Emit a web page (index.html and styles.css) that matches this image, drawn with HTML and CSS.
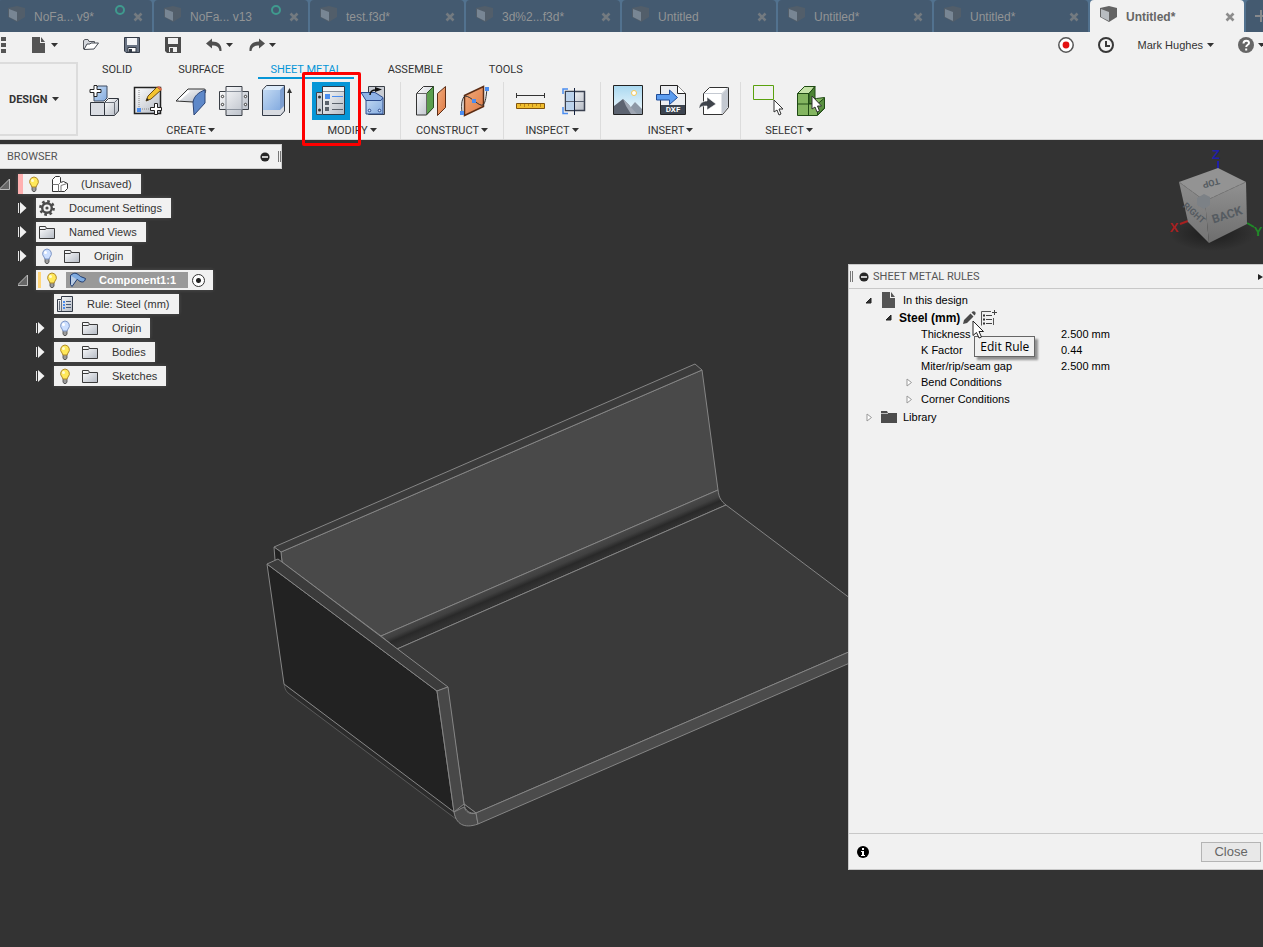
FILE: index.html
```html
<!DOCTYPE html>
<html lang="en">
<head>
    <meta charset="UTF-8">
    <meta name="viewport" content="width=device-width, initial-scale=1.0">
    <title>Untitled*</title>
    <link rel="stylesheet" href="styles.css">
</head>
<body>
    <!-- Shared icons -->
    <svg class="icon-defs" width="0" height="0" aria-hidden="true">
        <defs>
            <linearGradient id="silver" x1="0" y1="0" x2="1" y2="1">
                <stop offset="0" stop-color="#ffffff"/>
                <stop offset="1" stop-color="#b4bac4"/>
            </linearGradient>
            <linearGradient id="blue" x1="0" y1="0" x2="1" y2="1">
                <stop offset="0" stop-color="#c3daf3"/>
                <stop offset="1" stop-color="#85ace0"/>
            </linearGradient>
            <linearGradient id="orange" x1="0" y1="0" x2="1" y2="1">
                <stop offset="0" stop-color="#f2ab7c"/>
                <stop offset="1" stop-color="#dd7a45"/>
            </linearGradient>
            <linearGradient id="sky" x1="0" y1="0" x2="0" y2="1">
                <stop offset="0" stop-color="#a9d8f0"/>
                <stop offset="1" stop-color="#f4fbff"/>
            </linearGradient>
            <symbol id="cube" viewBox="0 0 17 16">
                <path d="M0 2l9-2 8 2v9l-8 5-9-5z" fill="#636363"/>
                <path d="M1 3l8 3v9l-8-4z" fill="#b8bcc0"/>
            </symbol>
            <symbol id="close" viewBox="0 0 10 10">
                <path d="M1.500 1.500l7 7M8.500 1.500l-7 7" stroke="currentColor" stroke-width="2.600" fill="none"/>
            </symbol>
            <symbol id="caret" viewBox="0 0 7 4">
                <path d="M0 0h7L3.500 4z" fill="currentColor"/>
            </symbol>
            <symbol id="file" viewBox="0 0 16 16">
                <path d="M1 0h8v6h5v10H1z" fill="#555"/>
                <path d="M10 0l4 5h-4z" fill="#555"/>
            </symbol>
            <symbol id="bulb-on" viewBox="0 0 12 16">
                <path d="M4 10h4v4l-1 1.500H5L4 14z" fill="#9a9a9a" stroke="#444" stroke-width=".8"/>
                <path d="M6 1a4.700 4.700 0 0 1 3 8l-1 2H4L3 9a4.700 4.700 0 0 1 3-8z" fill="#ffe95a" stroke="#b08a2a"/>
                <circle cx="4.500" cy="4.500" r="1.500" fill="#fffbd0"/>
            </symbol>
            <symbol id="bulb-off" viewBox="0 0 12 16">
                <path d="M4 10h4v4l-1 1.500H5L4 14z" fill="#9a9a9a" stroke="#444" stroke-width=".8"/>
                <path d="M6 1a4.700 4.700 0 0 1 3 8l-1 2H4L3 9a4.700 4.700 0 0 1 3-8z" fill="#ccdfff" stroke="#7d95c5"/>
                <circle cx="4.500" cy="4.500" r="1.500" fill="#fff"/>
            </symbol>
            <symbol id="folder" viewBox="0 0 16 14">
                <path d="M.5 13.500v-12h6l1 2h8v10z" fill="url(#silver)" stroke="#3a3a3a"/>
                <path d="M1 4.500h5l1.500-1" fill="none" stroke="#3a3a3a"/>
            </symbol>
            <symbol id="tree-open" viewBox="1 0 11 11">
                <path d="M10.500 0v10.500H0z" fill="#666" stroke="#bbb"/>
            </symbol>
            <symbol id="tree-shut" viewBox="1 0 10 12">
                <path d="M1.500 1v10" stroke="#e8e8e8"/>
                <path d="M3 0v12l6.500-6z" fill="#f1f1f1"/>
            </symbol>
            <symbol id="minus" viewBox="0 0 10 10">
                <circle cx="5" cy="5" r="4.600" fill="#262626"/>
                <path d="M2 5h6" stroke="#fff" stroke-width="1.500"/>
            </symbol>
            <symbol id="node-open" viewBox="1 0 7 7">
                <path d="M6 1v5H1z" fill="#333" stroke="#222"/>
            </symbol>
            <symbol id="node-shut" viewBox="0 0 7 9">
                <path d="M1 1v7l4.500-3.500z" fill="#fff" stroke="#999"/>
            </symbol>
            <symbol id="arrow-cursor" viewBox="0 0 12 19">
                <path d="M1 1v14.500l3.500-3 2.500 5.500 2.500-1L7 11.500h4.500z" fill="#fff" stroke="#222"/>
            </symbol>
        </defs>
    </svg>

    <nav class="doc-tabs">
        <div class="doc-tab">
            <svg class="doc-icon"><use href="#cube"/></svg>
            <a href="#">NoFa... v9*</a>
            <span class="sync"></span>
            <button class="close-tab" aria-label="Close tab"><svg><use href="#close"/></svg></button>
        </div>
        <div class="doc-tab">
            <svg class="doc-icon"><use href="#cube"/></svg>
            <a href="#">NoFa... v13</a>
            <span class="sync"></span>
            <button class="close-tab" aria-label="Close tab"><svg><use href="#close"/></svg></button>
        </div>
        <div class="doc-tab">
            <svg class="doc-icon"><use href="#cube"/></svg>
            <a href="#">test.f3d*</a>
            <button class="close-tab" aria-label="Close tab"><svg><use href="#close"/></svg></button>
        </div>
        <div class="doc-tab">
            <svg class="doc-icon"><use href="#cube"/></svg>
            <a href="#">3d%2...f3d*</a>
            <button class="close-tab" aria-label="Close tab"><svg><use href="#close"/></svg></button>
        </div>
        <div class="doc-tab">
            <svg class="doc-icon"><use href="#cube"/></svg>
            <a href="#">Untitled</a>
            <button class="close-tab" aria-label="Close tab"><svg><use href="#close"/></svg></button>
        </div>
        <div class="doc-tab">
            <svg class="doc-icon"><use href="#cube"/></svg>
            <a href="#">Untitled*</a>
            <button class="close-tab" aria-label="Close tab"><svg><use href="#close"/></svg></button>
        </div>
        <div class="doc-tab">
            <svg class="doc-icon"><use href="#cube"/></svg>
            <a href="#">Untitled*</a>
            <button class="close-tab" aria-label="Close tab"><svg><use href="#close"/></svg></button>
        </div>
        <div class="doc-tab active">
            <svg class="doc-icon"><use href="#cube"/></svg>
            <a href="#">Untitled*</a>
            <button class="close-tab" aria-label="Close tab"><svg><use href="#close"/></svg></button>
        </div>
        <button class="new-tab" aria-label="New tab">
            <svg width="12" height="12" viewBox="0 0 12 12"><path d="M6 0v12M0 6h12" stroke="#87898c" stroke-width="2"/></svg>
        </button>
    </nav>

    <div class="quick-bar">
        <button aria-label="Data panel">
            <svg width="16" height="16" viewBox="0 0 16 16"><path d="M0 0h4v4H0zM5 0h5v4H5zM11 0h5v4h-5zM0 6h4v4H0zM5 6h5v4H5zM11 6h5v4h-5zM0 12h4v4H0zM5 12h5v4H5zM11 12h5v4h-5z" fill="#555"/></svg>
        </button>
        <button aria-label="File">
            <svg width="16" height="16"><use href="#file"/></svg>
            <svg class="caret"><use href="#caret"/></svg>
        </button>
        <button aria-label="Open">
            <svg width="16" height="16" viewBox="0 0 16 16">
                <path d="M.5 12V3.500L2 2.500h3l1 2h5.500v2" fill="#d5d8de" stroke="#55585e"/>
                <path d="M1 12.500L4 7h3l1-1h7.500l-4.500 6z" fill="#fff" stroke="#454a52"/>
            </svg>
        </button>
        <button aria-label="Save">
            <svg width="16" height="16" viewBox="0 0 16 16">
                <path d="M.5.500h15v15H2L.500 14z" fill="#6a7484" stroke="#333a46"/>
                <path d="M3 1h10v7H3z" fill="#f3f4f6"/>
                <path d="M4 10.500h8V15H4z" fill="#fff" stroke="#333a46"/>
                <path d="M5 12h3v3H5z" fill="#333a46"/>
            </svg>
        </button>
        <button aria-label="Save as">
            <svg width="16" height="16" viewBox="0 0 16 16">
                <path d="M0 0h16v16H2l-2-2z" fill="#4c4c4c"/>
                <path d="M3 1h10v6H3zM4 10h8v5H4z" fill="#f1f1f1"/>
                <path d="M5 11h3v4H5z" fill="#4c4c4c"/>
            </svg>
        </button>
        <div class="history">
            <button aria-label="Undo">
                <svg width="16" height="16" viewBox="0 0 16 16"><path d="M0 6.500L6 1.500v3c6 0 10 3 9.500 9.500h-2C13 10 11 8.500 6 8.500v3z" fill="#505050"/></svg>
                <svg class="caret"><use href="#caret"/></svg>
            </button>
            <button aria-label="Redo">
                <svg width="16" height="16" viewBox="0 0 16 16"><path d="M16 6.500l-6-5v3C4 4.500 0 7.500.5 14h2c.5-4 2.500-5.500 7.500-5.500v3z" fill="#505050"/></svg>
                <svg class="caret"><use href="#caret"/></svg>
            </button>
        </div>
        <div class="account">
            <button aria-label="Record">
                <svg width="16" height="16" viewBox="0 0 16 16"><circle cx="8" cy="8" r="7.200" fill="#fff" stroke="#555" stroke-width="1.500"/><circle cx="8" cy="8" r="3.400" fill="#e31212"/></svg>
            </button>
            <button aria-label="Job status">
                <svg width="16" height="16" viewBox="0 0 16 16"><circle cx="8" cy="8" r="7" fill="none" stroke="#383838" stroke-width="2"/><path d="M8 4v5h4" fill="none" stroke="#383838" stroke-width="2"/></svg>
            </button>
            <button class="user">Mark Hughes <svg class="caret"><use href="#caret"/></svg></button>
            <button aria-label="Help">
                <svg width="16" height="16" viewBox="0 0 16 16"><circle cx="8" cy="8" r="8" fill="#666"/><path d="M5.500 6.500c0-4 5.500-3.500 5.500-.5 0 2-2.800 1.500-2.800 4M8.200 11.500v2" fill="none" stroke="#fff" stroke-width="2"/></svg>
                <svg class="caret"><use href="#caret"/></svg>
            </button>
        </div>
    </div>

    <div class="ribbon">
        <button class="workspace-menu">DESIGN <svg class="caret"><use href="#caret"/></svg></button>
        <div class="ribbon-body">
            <nav class="ribbon-tabs">
                <a href="#">SOLID</a>
                <a href="#">SURFACE</a>
                <a href="#" class="active">SHEET METAL</a>
                <a href="#">ASSEMBLE</a>
                <a href="#">TOOLS</a>
            </nav>
            <div class="tool-groups">
                <div class="tool-group">
                    <div class="tools">
                        <button class="tool" aria-label="New component">
                            <svg viewBox="0 0 32 32">
                                <path d="M5 5l4-4h9v12l-3 3H5z" fill="url(#blue)" stroke="#3d4a60"/>
                                <path d="M15.500 17.500l4-4h10V26l-4 4.500h-10z" fill="url(#silver)" stroke="#30353d"/>
                                <path d="M1.500 17.500h14v13h-14z" fill="#dadde3" stroke="#30353d"/>
                                <path d="M15.500 17.500h10v12M25.500 17.500l4-4" fill="none" stroke="#6a6f78"/>
                                <path d="M5 .5h3v4h4v3H8v4H5v-4H1v-3h4z" fill="#fff" stroke="#222"/>
                            </svg>
                        </button>
                        <button class="tool" aria-label="Create sketch">
                            <svg viewBox="0 0 32 32">
                                <path d="M2.500 2.500h26v26h-26z" fill="url(#silver)" stroke="#222" stroke-width="1.500"/>
                                <path d="M7 5v19h17" fill="none" stroke="#888" stroke-dasharray="1 1"/>
                                <path d="M5 23h4v4H5z" fill="#4b8df0"/>
                                <path d="M14 16l2-5L25 2l4 3-10 9z" fill="#f4c430" stroke="#6a4b14"/>
                                <path d="M25 2l2-1 3 3-1 2z" fill="#d76b4a"/>
                                <path d="M14 16l1-3 2 2z" fill="#222"/>
                                <path d="M22.500 18.500h3v4h4v3h-4v4h-3v-4h-4v-3h4z" fill="#fff" stroke="#222"/>
                            </svg>
                        </button>
                        <button class="tool" aria-label="Flange">
                            <svg viewBox="0 0 32 32">
                                <path d="M1 16L13 4h16c2 0 2 2 1 4L18 17z" fill="url(#silver)" stroke="#333"/>
                                <path d="M18 17c1-6 6-10 12-12v13L19 30z" fill="#5e88c9" stroke="#2d4678"/>
                                <path d="M14 6L4 15" stroke="#fff" stroke-width="2"/>
                            </svg>
                        </button>
                        <button class="tool" aria-label="Flat pattern">
                            <svg viewBox="0 0 32 32">
                                <path d="M8 1.500h16v5h6.500v18H24v6H8v-6H1.500v-18H8z" fill="url(#silver)" stroke="#3a3f46"/>
                                <path d="M8 6v19M24 6v19M8 6.500h16M8 24.500h16" stroke="#8b929c" fill="none"/>
                                <g fill="#fff" stroke="#333"><circle cx="4.500" cy="11.500" r="1.200"/><circle cx="4.500" cy="19.500" r="1.200"/><circle cx="27.500" cy="11.500" r="1.200"/><circle cx="27.500" cy="19.500" r="1.200"/></g>
                            </svg>
                        </button>
                        <button class="tool" aria-label="Extrude">
                            <svg viewBox="0 0 32 32">
                                <path d="M1.500 5l4-4.500h18V26l-4 4.500h-18z" fill="#d8dbe1" stroke="#333a46"/>
                                <path d="M2 5h17v20H2z" fill="url(#blue)"/>
                                <path d="M2 5l4-4h17l-4 4z" fill="#dcebfa"/>
                                <path d="M19 5l4-4v20l-4 4z" fill="#7d9ed0"/>
                                <path d="M28.500 5v23" stroke="#333"/><path d="M26 8l2.500-5L31 8z" fill="#333"/>
                            </svg>
                        </button>
                    </div>
                    <button class="group-label">CREATE <svg class="caret"><use href="#caret"/></svg></button>
                </div>
                <div class="tool-group">
                    <div class="tools">
                        <button class="tool selected" aria-label="Sheet metal rules">
                            <svg viewBox="0 0 32 32">
                                <path d="M7.500 1.500h22v28h-22z" fill="url(#silver)" stroke="#2f3a48"/>
                                <path d="M8 6.500h21" stroke="#8a919c"/>
                                <path d="M8 2h21v4H8z" fill="#f2f3f5"/>
                                <path d="M1.500 7.500h6v22h-6z" fill="#ccd0d7" stroke="#3c4450"/>
                                <circle cx="4.500" cy="12" r="1.500" fill="#333"/><circle cx="4.500" cy="25" r="1.500" fill="#333"/>
                                <path d="M10 9h5v5h-5z" fill="#4b8df0"/><path d="M10 16h4v4h-4zM10 22h4v4h-4z" fill="#5a616b"/>
                                <path d="M17 11.500h11" stroke="#4b8df0"/><path d="M17 18.500h11M17 24.500h11" stroke="#5a616b"/>
                            </svg>
                            <span class="highlight"></span>
                        </button>
                        <button class="tool" aria-label="Unfold">
                            <svg viewBox="0 0 32 32">
                                <path d="M10.500 1.500h16v28h-16z" fill="#c9cdd4" stroke="#3a3f46"/>
                                <path d="M8 13h17v16H8z" fill="url(#blue)" stroke="#2d4c8c"/>
                                <path d="M3 7.500h14l8 5-2 3H8z" fill="#8fb2e6" stroke="#2d4c8c"/>
                                <g fill="#dfeaff" stroke="#2d4c8c"><circle cx="11.500" cy="25.500" r="1.300"/><circle cx="21.500" cy="25.500" r="1.300"/></g>
                                <path d="M12 10c0-4 3-5 6-5" fill="none" stroke="#111" stroke-width="1.500"/><path d="M17 2l7 2.500L17 7z" fill="#111"/>
                            </svg>
                        </button>
                    </div>
                    <button class="group-label">MODIFY <svg class="caret"><use href="#caret"/></svg></button>
                </div>
                <div class="tool-group roomy">
                    <div class="tools">
                        <button class="tool" aria-label="Offset plane">
                            <svg viewBox="0 0 32 32">
                                <path d="M1.500 8.500l7-7h10v21l-7 7.500h-10z" fill="url(#silver)" stroke="#333"/>
                                <path d="M11.500 8.500l7-7v21l-7 7z" fill="#5b9e4d" stroke="#2c5424"/>
                                <path d="M2 8.500h9.500V29" fill="none" stroke="#666"/>
                                <path d="M22.500 8.500l8-7v21l-8 8z" fill="url(#orange)" stroke="#5c2d15"/>
                            </svg>
                        </button>
                        <button class="tool" aria-label="Plane along path">
                            <svg viewBox="0 0 32 32">
                                <path d="M6.500 10.500l19-9v20l-19 9z" fill="url(#orange)" stroke="#5c2d15" stroke-width="1.500"/>
                                <path d="M4 27c-1-8 0-14 3-16 6 0 14 11 18 9 3-3 3-9 4-16" fill="none" stroke="#333"/>
                                <path d="M27 2h4v4h-4zM14 14h4v4h-4zM2 26h4v4H2z" fill="#4b8df0"/>
                            </svg>
                        </button>
                    </div>
                    <button class="group-label">CONSTRUCT <svg class="caret"><use href="#caret"/></svg></button>
                </div>
                <div class="tool-group">
                    <div class="tools">
                        <button class="tool" aria-label="Measure">
                            <svg viewBox="0 0 32 32">
                                <path d="M1.500 8v5M29.500 8v5M2 10.500h28" stroke="#333" fill="none"/>
                                <path d="M1.500 18.500h28v5h-28z" fill="#f0bd2d" stroke="#80530c"/>
                                <path d="M5.500 19v2M9.500 19v3M13.500 19v2M17.500 19v3M21.500 19v2M25.500 19v3" stroke="#b8851a"/>
                            </svg>
                        </button>
                        <button class="tool" aria-label="Section analysis">
                            <svg viewBox="0 0 32 32">
                                <path d="M7.500 6.500h19v19h-19z" fill="url(#silver)" stroke="#3a4150" stroke-width="1.500"/>
                                <path d="M8 7h8v18H8z" fill="#bcd3ec"/>
                                <path d="M8 16.500h18" stroke="#596171" fill="none"/>
                                <path d="M16.500 3v27" stroke="#14213d"/>
                                <path d="M10 4H5v5M5 22v6.500h5" fill="none" stroke="#4b8df0" stroke-width="1.500"/>
                            </svg>
                        </button>
                    </div>
                    <button class="group-label">INSPECT <svg class="caret"><use href="#caret"/></svg></button>
                </div>
                <div class="tool-group">
                    <div class="tools">
                        <button class="tool" aria-label="Insert canvas">
                            <svg viewBox="0 0 32 32">
                                <path d="M1.500.500h29v29h-29z" fill="url(#sky)" stroke="#222"/>
                                <path d="M13 29l10-12 7 7v5z" fill="#8d98a6"/>
                                <path d="M2 21l9-7 6 6 6 9H2z" fill="#5c6370"/>
                                <path d="M11 14l6 6 8 9h-6l-5-8z" fill="#9fa6b2"/>
                                <circle cx="22" cy="8" r="2.500" fill="#fff" stroke="#f4c858"/>
                            </svg>
                        </button>
                        <button class="tool" aria-label="Insert DXF">
                            <svg viewBox="0 0 32 32">
                                <path d="M5.500.500h17l8 8v21h-25z" fill="#eceef1" stroke="#222"/>
                                <path d="M22.500.500v8h8" fill="#fff" stroke="#222"/>
                                <path d="M6 20h24v9H6z" fill="#3c4450"/>
                                <path d="M1.500 9.500h13V5l8 7.500-8 7V15h-13z" fill="#5c9df0" stroke="#1f4d99"/>
                                <text class="dxf" x="18" y="27" text-anchor="middle">DXF</text>
                            </svg>
                        </button>
                        <button class="tool" aria-label="Insert derive">
                            <svg viewBox="0 0 32 32">
                                <path d="M5.500 8.500l6-6h19v20l-6 7h-19z" fill="#fff" stroke="#333"/>
                                <path d="M24 9l6-6v19l-6 7z" fill="#c4c9d1"/><path d="M6 8.500h18V29M24 8.500l6-6" fill="none" stroke="#c4c9d1"/>
                                <path d="M1 24c0-6 4-8 8-8v-4l9 7-9 6v-4c-4 0-6 0-8 3z" fill="#3f444b" stroke="#fff" stroke-width=".6"/>
                            </svg>
                        </button>
                    </div>
                    <button class="group-label">INSERT <svg class="caret"><use href="#caret"/></svg></button>
                </div>
                <div class="tool-group last">
                    <div class="tools">
                        <button class="tool" aria-label="Window select">
                            <svg viewBox="0 0 32 32">
                                <path d="M1.500.500h20v14h-20z" fill="none" stroke="#5aa10e"/>
                                <path d="M22 15v12l3-2 2 5 2-1-2-5h4z" fill="#fff" stroke="#333"/>
                            </svg>
                        </button>
                        <button class="tool" aria-label="Select body">
                            <svg viewBox="0 0 32 32">
                                <path d="M2.500 8.500l7-7h10v12h2l8-1v11l-7 7h-20z" fill="#83b560" stroke="#1f4a14"/>
                                <path d="M2.500 8.500l7-7h10.500l-6 7z" fill="#c4e2a7" stroke="#1f4a14"/>
                                <path d="M20 1.500l-6 7v10h6z" fill="#4c8334" stroke="#1f4a14"/>
                                <path d="M2.500 19h20M13.500 9v21M22.500 19v11l7-7V13z" fill="#5b9142" stroke="#1f4a14"/>
                                <path d="M17 11v13l3-2 2 5 2.500-1-2-5h4z" fill="#fff" stroke="#333"/>
                            </svg>
                        </button>
                    </div>
                    <button class="group-label">SELECT <svg class="caret"><use href="#caret"/></svg></button>
                </div>
            </div>
        </div>
    </div>

    <main class="viewport">
        <svg class="model" width="1263" height="807" viewBox="0 140 1263 807">
            <defs>
                <linearGradient id="bend" gradientUnits="userSpaceOnUse" x1="550" y1="563" x2="556" y2="577">
                    <stop offset="0" stop-color="#484848"/>
                    <stop offset=".35" stop-color="#404040"/>
                    <stop offset=".65" stop-color="#292929"/>
                    <stop offset="1" stop-color="#323232"/>
                </linearGradient>
            </defs>
            <g stroke="#858585" stroke-linejoin="round">
                <path d="M281 552L702 370l16 120-337 146-99-74z" fill="#494949"/>
                <path d="M274 547L695 364l7 6-421 182z" fill="#3b3b3b"/>
                <path d="M274 547l7 5 1 10-7-2z" fill="#222"/>
                <path d="M718 490c1 8 3 11 8 15L397 649l-16-13z" fill="url(#bend)"/>
                <path d="M397 649l329-144 169 127-419 181-12-9-17-117z" fill="#3a3a3a"/>
                <path d="M284 684c1 4 1 6 4 9l168 126-2-8z" fill="#2b2b2b" stroke="#5a5a5a"/>
                <path d="M267 564l170 127 17 121-170-128z" fill="#222"/>
                <path d="M267 564l11-5 170 128-11 4z" fill="#3b3b3b"/>
                <path d="M437 691l11-4 16 117-10 8z" fill="#484848"/>
                <path d="M464 804l12 9c-6 1-11-2-12-9z" fill="#303030"/>
                <path d="M454 812l10-5c2 5 6 8 12 6l2 11c-14 5-22 0-24-12z" fill="#4b4b4b"/>
                <path d="M476 813l419-181 1 11-418 181z" fill="#4b4b4b"/>
            </g>
        </svg>

        <section class="browser">
            <header class="browser-header">
                <h2>BROWSER</h2>
                <button aria-label="Collapse browser"><svg width="10" height="10"><use href="#minus"/></svg></button>
                <span class="grip"></span>
            </header>
            <ul class="tree">
                <li>
                    <button class="expander" aria-label="Collapse"><svg width="11" height="11"><use href="#tree-open"/></svg></button>
                    <div class="node unsaved">
                        <span class="node-icon"><svg width="12" height="16"><use href="#bulb-on"/></svg></span>
                        <span class="node-icon"><svg width="17" height="16" viewBox="0 0 17 16"><path d="M1.500 3.500l3-3h4l1 1v5l3-1 4 2v5l-3 3h-12z" fill="#fff" stroke="#333"/><path d="M1.500 8.500h6v7M7.500 8.500l2-2M10 9.500l6-2M10 9.500v6" fill="none" stroke="#777"/></svg></span>
                        <span class="node-name">(Unsaved)</span>
                    </div>
                </li>
                <li class="level-1">
                    <button class="expander" aria-label="Expand"><svg width="10" height="12"><use href="#tree-shut"/></svg></button>
                    <div class="node">
                        <span class="node-icon"><svg width="16" height="16" viewBox="0 0 16 16"><circle cx="8" cy="8" r="6.600" fill="none" stroke="#4a4a4a" stroke-width="2.600" stroke-dasharray="2.600 2.580"/><circle cx="8" cy="8" r="4.800" fill="none" stroke="#4a4a4a" stroke-width="2.400"/><circle cx="8" cy="8" r="1.600" fill="#4a4a4a"/></svg></span>
                        <span class="node-name">Document Settings</span>
                    </div>
                </li>
                <li class="level-1">
                    <button class="expander" aria-label="Expand"><svg width="10" height="12"><use href="#tree-shut"/></svg></button>
                    <div class="node">
                        <span class="node-icon"><svg width="16" height="14"><use href="#folder"/></svg></span>
                        <span class="node-name">Named Views</span>
                    </div>
                </li>
                <li class="level-1">
                    <button class="expander" aria-label="Expand"><svg width="10" height="12"><use href="#tree-shut"/></svg></button>
                    <div class="node">
                        <span class="node-icon"><svg width="12" height="16"><use href="#bulb-off"/></svg></span>
                        <span class="node-icon"><svg width="16" height="14"><use href="#folder"/></svg></span>
                        <span class="node-name">Origin</span>
                    </div>
                </li>
                <li class="level-1">
                    <button class="expander" aria-label="Collapse"><svg width="11" height="11"><use href="#tree-open"/></svg></button>
                    <div class="node component">
                        <span class="node-icon"><svg width="12" height="16"><use href="#bulb-on"/></svg></span>
                        <span class="component-name">
                            <span class="node-icon"><svg width="17" height="16" viewBox="0 0 17 16"><path d="M1.500 3.500c4-4 7-2 10 1l5 2c-1 5-5 4-8 1-2 0-3 1-4 3z" fill="#7fabe0" stroke="#1f3c70"/><path d="M1.500 3.500v9l1.500 2 5-7" fill="#b9cbe3" stroke="#1f3c70"/></svg></span>
                            <span class="node-name">Component1:1</span>
                        </span>
                        <input type="radio" name="activeComponent" aria-label="Activate Component1:1" checked>
                    </div>
                </li>
                <li class="level-2">
                    <div class="node">
                        <span class="node-icon"><svg width="16" height="16" viewBox="0 0 16 16"><path d="M4.500.500h11v15H.5v-12h4z" fill="url(#silver)" stroke="#333a46"/><path d="M4.500 3v12M2.500 5v9" stroke="#69707c"/><path d="M6 5h2v2H6zM6 8h2v2H6zM6 11h2v2H6z" fill="#4b8df0"/><path d="M9 5.500h5M9 8.500h5M9 11.500h5" stroke="#4b5b74"/></svg></span>
                        <span class="node-name">Rule: Steel (mm)</span>
                    </div>
                </li>
                <li class="level-2">
                    <button class="expander" aria-label="Expand"><svg width="10" height="12"><use href="#tree-shut"/></svg></button>
                    <div class="node">
                        <span class="node-icon"><svg width="12" height="16"><use href="#bulb-off"/></svg></span>
                        <span class="node-icon"><svg width="16" height="14"><use href="#folder"/></svg></span>
                        <span class="node-name">Origin</span>
                    </div>
                </li>
                <li class="level-2">
                    <button class="expander" aria-label="Expand"><svg width="10" height="12"><use href="#tree-shut"/></svg></button>
                    <div class="node">
                        <span class="node-icon"><svg width="12" height="16"><use href="#bulb-on"/></svg></span>
                        <span class="node-icon"><svg width="16" height="14"><use href="#folder"/></svg></span>
                        <span class="node-name">Bodies</span>
                    </div>
                </li>
                <li class="level-2">
                    <button class="expander" aria-label="Expand"><svg width="10" height="12"><use href="#tree-shut"/></svg></button>
                    <div class="node">
                        <span class="node-icon"><svg width="12" height="16"><use href="#bulb-on"/></svg></span>
                        <span class="node-icon"><svg width="16" height="14"><use href="#folder"/></svg></span>
                        <span class="node-name">Sketches</span>
                    </div>
                </li>
            </ul>
        </section>

        <aside class="side">
            <svg class="view-cube" width="113" height="124" viewBox="0 0 113 124">
                <defs>
                    <radialGradient id="cube-shadow"><stop offset="0" stop-color="#1c1c1c"/><stop offset="1" stop-color="#333"/></radialGradient>
                    <linearGradient id="cube-left" x1="0" y1="0" x2="0" y2="1"><stop offset="0" stop-color="#8c8c8c"/><stop offset="1" stop-color="#757575"/></linearGradient>
                    <linearGradient id="cube-right" x1="0" y1="0" x2="0" y2="1"><stop offset="0" stop-color="#919191"/><stop offset="1" stop-color="#6e6e6e"/></linearGradient>
                </defs>
                <ellipse cx="62" cy="93" rx="43" ry="18" fill="url(#cube-shadow)"/>
                <path d="M68 21v8" stroke="#1f1fa8" stroke-width="2"/>
                <path d="M38 81l-8 3" stroke="#a82020" stroke-width="2"/>
                <path d="M97 83l7 4" stroke="#1f8a28" stroke-width="2"/>
                <path d="M29 42l39-14 28 14-41 19z" fill="#939393"/>
                <path d="M29 42l26 19 4 42-21-21z" fill="url(#cube-left)"/>
                <path d="M55 61l41-19 1 42-38 19z" fill="url(#cube-right)"/>
                <path d="M29 42l26 19 41-19" fill="none" stroke="#777" stroke-dasharray="4 2"/>
                <path d="M47 58l7-4 6 3v8l-6 4-7-4z" fill="#7c8186"/>
                <text class="face" x="77" y="79" text-anchor="middle" transform="rotate(-18 77 75)">BACK</text>
                <text class="face small" x="61" y="46" text-anchor="middle" transform="rotate(165 61 43)">TOP</text>
                <text class="face small" x="44" y="76" text-anchor="middle" transform="rotate(42 44 73)">RIGHT</text>
                <text class="axis axis-z" x="66" y="19" text-anchor="middle">Z</text>
                <text class="axis axis-x" x="24" y="92" text-anchor="middle">X</text>
                <text class="axis axis-y" x="108" y="96" text-anchor="middle">Y</text>
            </svg>

            <section class="rules">
                <header class="rules-header">
                    <span class="grip"></span>
                    <button aria-label="Collapse panel"><svg width="10" height="10"><use href="#minus"/></svg></button>
                    <h2>SHEET METAL RULES</h2>
                    <button class="dock" aria-label="Dock panel"><svg width="5" height="8" viewBox="0 0 5 8"><path d="M0 1l5 3-5 3z" fill="#222"/></svg></button>
                </header>
                <div class="rules-body">
                    <div class="rule-row tall">
                        <button class="toggle" aria-label="Collapse"><svg width="7" height="7"><use href="#node-open"/></svg></button>
                        <svg class="rule-icon" width="16" height="16"><use href="#file"/></svg>
                        <span>In this design</span>
                    </div>
                    <div class="rule-row steel">
                        <button class="toggle" aria-label="Collapse"><svg width="7" height="7"><use href="#node-open"/></svg></button>
                        <b>Steel (mm)</b>
                        <button class="edit-rule" aria-label="Edit Rule">
                            <svg width="13" height="13" viewBox="0 0 13 13"><path d="M0 13l1-4 6.500-6.500 3 3L4 12zM8.500 1.500c2.500-3 6 .5 3 3z" fill="#4a4a4a"/></svg>
                            <svg class="pointer" width="12" height="19"><use href="#arrow-cursor"/></svg>
                            <span class="tooltip">Edit Rule</span>
                        </button>
                        <button aria-label="New rule">
                            <svg width="16" height="16" viewBox="0 0 16 16"><path d="M10 1.500H.5v14M12.500 8v7" fill="none" stroke="#555"/><path d="M2 5.500h2M2 9.500h2M2 13.500h2" stroke="#333" stroke-width="2"/><path d="M5 5.500h6M5 9.500h6M5 13.500h6M13.500 0v5M11 2.500h5" stroke="#444"/></svg>
                        </button>
                    </div>
                    <dl class="properties">
                        <dt>Thickness</dt><dd>2.500 mm</dd>
                        <dt>K Factor</dt><dd>0.44</dd>
                        <dt>Miter/rip/seam gap</dt><dd>2.500 mm</dd>
                    </dl>
                    <div class="rule-row condition">
                        <button class="toggle" aria-label="Expand"><svg width="7" height="9"><use href="#node-shut"/></svg></button>
                        <span>Bend Conditions</span>
                    </div>
                    <div class="rule-row condition tall">
                        <button class="toggle" aria-label="Expand"><svg width="7" height="9"><use href="#node-shut"/></svg></button>
                        <span>Corner Conditions</span>
                    </div>
                    <div class="rule-row tall">
                        <button class="toggle" aria-label="Expand"><svg width="7" height="9"><use href="#node-shut"/></svg></button>
                        <svg class="rule-icon" width="16" height="12" viewBox="0 0 16 12"><path d="M0 0h6l1 2h9v10H0z" fill="#4c4c4c"/><path d="M0 2.500h7" stroke="#bbb"/></svg>
                        <span>Library</span>
                    </div>
                </div>
                <footer class="rules-footer">
                    <button aria-label="Info"><svg width="12" height="12" viewBox="0 0 12 12"><circle cx="6" cy="6" r="6"/><path d="M5 2h2v2H5zM4 5h3v4h1v1H4V9h1V6H4z" fill="#fff"/></svg></button>
                    <button class="close-button">Close</button>
                </footer>
            </section>
        </aside>
    </main>
</body>
</html>
```

FILE: styles.css
```css
* {
    box-sizing: border-box;
}
body {
    margin: 0;
    height: 100vh;
    display: flex;
    flex-direction: column;
    overflow: hidden;
    font-family: "Liberation Sans", Arial, sans-serif;
    font-size: 11px;
    color: #333;
    background: #333;
}
button {
    display: flex;
    align-items: center;
    padding: 0;
    border: none;
    background: none;
    font: inherit;
    color: inherit;
    cursor: pointer;
}
a {
    color: inherit;
    text-decoration: none;
}
h2 {
    margin: 0;
    font-family: Roboto, sans-serif;
    font-size: 11px;
    font-weight: normal;
    color: #555;
}
svg {
    display: block;
    flex: none;
}
.icon-defs {
    position: absolute;
}
.caret {
    width: 7px;
    height: 4px;
    color: #333;
}

/* document tabs */
.doc-tabs {
    flex: none;
    display: flex;
    gap: 2px;
    height: 32px;
    margin-left: -2px;
    background: #52728f;
}
.doc-tab {
    flex: none;
    display: flex;
    align-items: center;
    width: 154px;
    padding: 1px 9px 0 10px;
    background: #445a70;
    border-radius: 4px 4px 0 0;
    color: #929495;
    font-size: 12px;
}
.doc-icon {
    width: 17px;
    height: 16px;
    margin: 0 9px 5px 0;
    opacity: 0.45;
}
.sync {
    width: 10px;
    height: 10px;
    margin: 0 8px 14px 0;
    border: 2px solid #3f9a8e;
    border-radius: 50%;
}
.doc-tab a {
    flex: 1;
}
.close-tab {
    color: #737a80;
}
.close-tab svg {
    width: 10px;
    height: 10px;
}
.doc-tab.active {
    background: #f1f1f1;
    color: #666;
    font-weight: bold;
}
.doc-tab.active .doc-icon {
    opacity: 1;
}
.doc-tab.active .close-tab {
    color: #8c8c8c;
}
.new-tab {
    flex: 1;
    padding-left: 9px;
    background: #445a70;
    border-radius: 4px 0 0 0;
}

/* quick access bar */
.quick-bar {
    flex: none;
    display: flex;
    align-items: center;
    gap: 25px;
    height: 28px;
    padding-bottom: 2px;
    background: #f1f1f1;
    overflow: hidden;
}
.quick-bar button {
    gap: 4px;
}
.quick-bar > button:first-child {
    margin-left: -10px;
}
.history {
    display: flex;
    gap: 16px;
}
.account {
    display: flex;
    align-items: center;
    gap: 24px;
    margin-left: auto;
    margin-right: -2px;
}

/* ribbon */
.ribbon {
    flex: none;
    display: flex;
    background: #f1f1f1;
    border-bottom: 1px solid #d4d4d4;
    font-family: Roboto, sans-serif;
}
.workspace-menu {
    width: 79px;
    gap: 4px;
    margin: 2px 0 3px -1px;
    padding-left: 10px;
    border: 2px solid #dcdcdc;
    border-left: none;
    font-weight: bold;
}
.ribbon-tabs {
    display: flex;
    gap: 22px;
    padding-left: 12px;
}
.ribbon-tabs a {
    height: 19px;
    padding: 0 12px;
    border-bottom: 2px solid transparent;
    line-height: 19px;
}
.ribbon-tabs .active {
    color: #0696d7;
    border-color: #0696d7;
}
.tool-groups {
    display: flex;
    margin-top: 3px;
}
.tool-group {
    display: flex;
    flex-direction: column;
    align-items: center;
    padding: 0 5px;
    border-right: 1px solid #dcdcdc;
}
.tool-group.roomy {
    padding: 0 8px;
}
.tool-group.last {
    border-right-color: transparent;
}
.tools {
    display: flex;
    gap: 5px;
    padding: 0 2px 0 3px;
}
.tool {
    position: relative;
    justify-content: center;
    width: 38px;
    height: 38px;
}
.tool > svg {
    width: 32px;
    height: 32px;
}
.tool.selected {
    background: #0696d7;
}
.highlight {
    position: absolute;
    z-index: 5;
    top: -10px;
    left: -10px;
    width: 59px;
    height: 74px;
    border: 3px solid #fe0000;
    border-radius: 2px;
}
.group-label {
    gap: 2px;
    height: 19px;
    padding-top: 1px;
}
.dxf {
    font-size: 8px;
    font-weight: bold;
    fill: #fff;
}

/* modelling viewport */
.viewport {
    position: relative;
    flex: 1;
    display: flex;
    justify-content: space-between;
    overflow: hidden;
}
.model {
    position: absolute;
    top: 0;
    left: 0;
}
.browser,
.side {
    position: relative;
}
.browser {
    width: 282px;
    padding-top: 4px;
}
.browser-header {
    display: flex;
    align-items: center;
    gap: 8px;
    height: 25px;
    padding-left: 7px;
    background: #f1f1f1;
    border: solid #cfcfcf;
    border-width: 1px 1px 1px 0;
}
.browser-header h2 {
    flex: 1;
}
.grip {
    width: 3px;
    height: 11px;
    border: solid #777;
    border-width: 0 1px;
}
.tree {
    list-style: none;
    margin: 5px 0 0;
    padding: 0;
}
.tree li {
    display: flex;
    align-items: center;
    height: 20px;
    margin-bottom: 4px;
}
.tree .level-1 {
    padding-left: 18px;
}
.tree .level-2 {
    padding-left: 36px;
}
.expander {
    width: 18px;
}
.node {
    display: flex;
    align-items: center;
    height: 20px;
    background: #f1f1f1;
    box-shadow: 0 0 4px rgba(255, 255, 255, 0.15);
}
.node:first-child {
    margin-left: 18px;
}
.node-icon {
    display: flex;
    justify-content: center;
    width: 22px;
}
.node-icon + .node-icon {
    margin-left: 3px;
}
.node-name {
    padding: 0 9px 0 11px;
}
.unsaved {
    border-left: 5px solid #ffb0b0;
}
.component::before {
    content: "";
    width: 3px;
    height: 16px;
    margin-left: 2px;
    background: #ffd67a;
}
.component-name {
    display: flex;
    align-items: center;
    height: 16px;
    margin: 0 4px 0 3px;
    padding-right: 3px;
    background: #999;
    color: #fff;
    font-weight: bold;
}
.component input {
    appearance: none;
    width: 13px;
    height: 13px;
    margin: 0 8px 0 0;
    border: 1px solid #333;
    border-radius: 50%;
    background: radial-gradient(circle, #222 2px, #fff 3px);
}

/* right side */
.side {
    display: flex;
    flex-direction: column;
    width: 415px;
}
.view-cube {
    align-self: flex-end;
}
.face {
    font: bold 12px Roboto, sans-serif;
    fill: #555b61;
}
.face.small {
    font-size: 9px;
}
.axis {
    font: bold 13px "Liberation Sans", Arial, sans-serif;
}
.axis-z {
    fill: #1f1fa8;
}
.axis-x {
    fill: #a82020;
}
.axis-y {
    fill: #1f8a28;
}
.rules {
    flex: 1;
    display: flex;
    flex-direction: column;
    margin-bottom: 77px;
    background: #f1f1f1;
    border: solid #c8c8c8;
    border-width: 1px 0 1px 1px;
    color: #000;
}
.rules-header {
    display: flex;
    align-items: center;
    height: 24px;
    padding-left: 1px;
    border-bottom: 1px solid #c8c8c8;
}
.rules-header h2 {
    flex: 1;
    padding-left: 4px;
}
.rules-header .grip {
    margin-right: 6px;
}
.rules-body {
    flex: 1;
    padding-top: 2px;
}
.rule-row {
    display: flex;
    align-items: center;
    height: 16px;
    padding-left: 17px;
}
.rule-row.tall {
    height: 18px;
}
.rule-row.steel {
    height: 17px;
    padding-left: 37px;
    font-size: 12px;
}
.rule-row.condition {
    padding-left: 57px;
}
.toggle {
    width: 13px;
}
.condition .toggle {
    width: 15px;
}
.rule-icon {
    margin: 0 6px 0 2px;
}
.edit-rule {
    position: relative;
    margin: 0 5px 0 3px;
}
.pointer {
    position: absolute;
    z-index: 3;
    top: 9px;
    left: 9px;
}
.tooltip {
    position: absolute;
    z-index: 2;
    top: 25px;
    left: 11px;
    padding: 0 5px;
    border: 1px solid #666;
    background: #f1f1f1;
    box-shadow: 3px 3px 2px rgba(0, 0, 0, 0.4);
    font: 12px/19px "Open Sans", "Noto Sans", sans-serif;
    white-space: nowrap;
}
.properties {
    display: grid;
    grid-template-columns: 140px 1fr;
    margin: 0;
    padding-left: 72px;
    line-height: 16px;
}
.properties dd {
    margin: 0;
}
.rules-footer {
    display: flex;
    align-items: center;
    justify-content: space-between;
    height: 36px;
    padding: 0 2px 0 8px;
    border-top: 1px solid #c8c8c8;
}
.close-button {
    justify-content: center;
    width: 60px;
    height: 20px;
    border: 1px solid #b4b4b4;
    background: #e8e8e8;
    color: #666;
    font-size: 13px;
}
```
